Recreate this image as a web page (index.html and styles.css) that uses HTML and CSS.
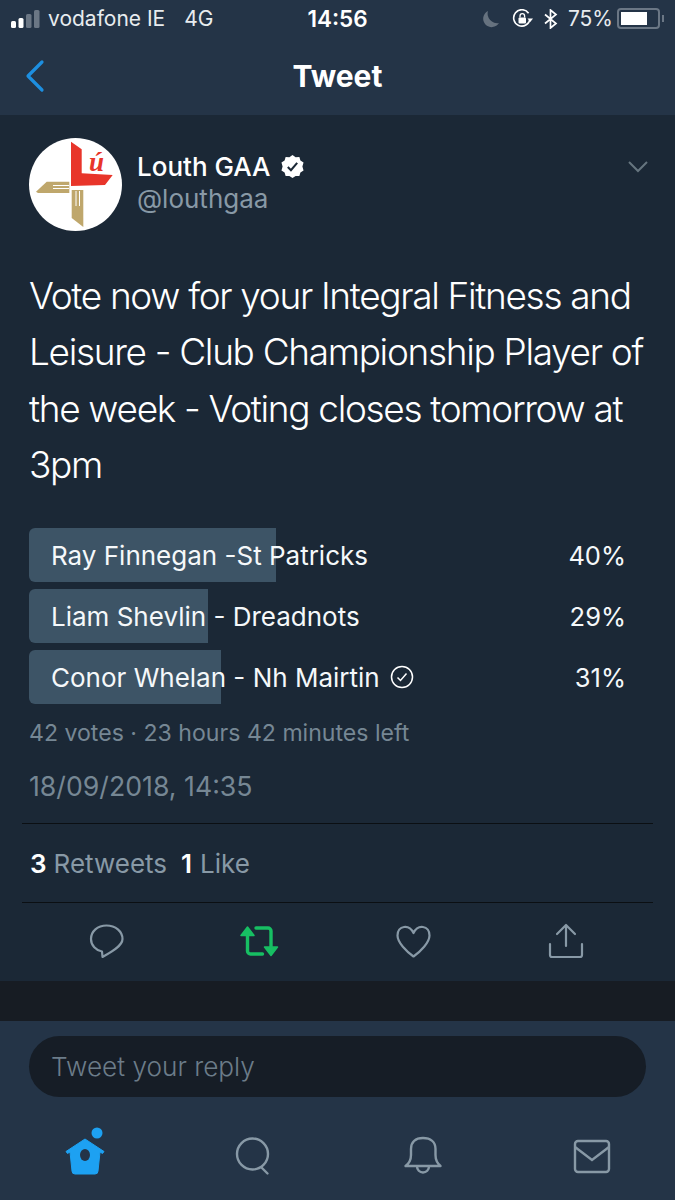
FILE: index.html
```html
<!DOCTYPE html>
<html lang="en">
<head>
<meta charset="utf-8">
<title>Tweet</title>
<link rel="stylesheet" href="styles.css">
</head>
<body>
<div class="app">
  <header class="top">
    <div class="status">
      <div class="status-left">
        <svg class="signal" width="30" height="20" viewBox="0 0 30 20"><rect x="0" y="12" width="5" height="7" rx="1.5" fill="#fff"/><rect x="7.5" y="9" width="5" height="10" rx="1.5" fill="#fff"/><rect x="15" y="5" width="5.5" height="14" rx="1.5" fill="#6b7785"/><rect x="23" y="1" width="5.5" height="18" rx="1.5" fill="#6b7785"/></svg>
        <span>vodafone IE</span>
        <span class="net">4G</span>
      </div>
      <div class="time">14:56</div>
      <div class="status-right">
        <svg class="moon" width="18" height="18" viewBox="0 0 18 18"><path d="M6 1a8.5 8.5 0 1 0 11 12A9.5 9.5 0 0 1 6 1z" fill="#66727f"/></svg>
        <svg class="lock" width="22" height="20" viewBox="0 0 22 20"><path d="M16.6 4.2A8.2 8.2 0 1 0 18 10" fill="none" stroke="#fff" stroke-width="1.6"/><path d="M15.5 9.5h5.5L18.300 13z" fill="#fff"/><rect x="6.500" y="8.500" width="7.500" height="6" rx="1" fill="#fff"/><path d="M8 8.500V7a2.300 2.300 0 0 1 4.600 0v1.500" fill="none" stroke="#fff" stroke-width="1.300"/></svg>
        <svg class="bt" width="14" height="20" viewBox="0 0 14 20"><path d="M1 5.500l11 9-5.500 4.500V1L12 5.500l-11 9" fill="none" stroke="#fff" stroke-width="1.700"/></svg>
        <span class="pct">75%</span>
        <div class="battery"><div class="battery-fill"></div></div>
        <div class="battery-nub"></div>
      </div>
    </div>
    <nav class="nav">
      <svg class="back" width="20" height="34" viewBox="0 0 20 34"><path d="M17 3L3 17l14 14" fill="none" stroke="#1d8fe0" stroke-width="3.200" stroke-linecap="round" stroke-linejoin="round"/></svg>
      <h1 class="title">Tweet</h1>
    </nav>
  </header>

  <main class="tweet">
    <div class="author">
      <svg class="avatar" width="93" height="93" viewBox="0 0 93 93">
        <circle cx="46.500" cy="46.500" r="46.500" fill="#fff"/>
        <path d="M42 3.700L52.700 11.300V35.300L83.700 37L76 47L42 48z" fill="#e8352a"/>
        <text class="avatar-letter" x="60" y="33">ú</text>
        <path d="M7 53.700L17.700 43.700H40.300V55H9z" fill="#bfa76c"/>
        <path d="M42.700 52H54.300V89L42.700 80z" fill="#bfa76c"/>
        <path d="M24 47.500H40M24 50.500H40M47 53V68M50.500 53V68" stroke="#fff" stroke-width="1"/>
      </svg>
      <div class="names">
        <div class="name-row">
          <span class="name">Louth GAA</span>
          <svg width="25" height="25" viewBox="0 0 24 24"><path d="M12 1l3 2 3.600-.2 1 3.400 3 2L21.500 12l1.100 3.800-3 2-1 3.400-3.600-.2-3 2-3-2-3.600.2-1-3.400-3-2L2.500 12 1.400 8.200l3-2 1-3.400L9 3z" fill="#fff"/><path d="M7.500 12.500l3 3 6-7" fill="none" stroke="#1b2836" stroke-width="2"/></svg>
        </div>
        <div class="handle">@louthgaa</div>
      </div>
      <svg class="chev" width="22" height="14" viewBox="0 0 22 14"><path d="M2 2l9 9 9-9" fill="none" stroke="#66757f" stroke-width="2"/></svg>
    </div>

    <p class="text">Vote now for your Integral Fitness and Leisure - Club Championship Player of the week - Voting closes tomorrow at 3pm</p>

    <div class="poll">
      <div class="option">
        <div class="bar" style="width:40%"></div>
        <span class="label">Ray Finnegan -St Patricks</span>
        <span class="value">40%</span>
      </div>
      <div class="option">
        <div class="bar" style="width:29%"></div>
        <span class="label">Liam Shevlin - Dreadnots</span>
        <span class="value">29%</span>
      </div>
      <div class="option">
        <div class="bar" style="width:31.100%"></div>
        <span class="label">Conor Whelan - Nh Mairtin</span>
        <svg class="voted" width="24" height="24" viewBox="0 0 24 24"><circle cx="12" cy="12" r="10.500" fill="none" stroke="#fff" stroke-width="1.500"/><path d="M7.500 12.500l3 3 6-7" fill="none" stroke="#fff" stroke-width="1.500"/></svg>
        <span class="value">31%</span>
      </div>
    </div>

    <div class="votes">42 votes · 23 hours 42 minutes left</div>
    <div class="date">18/09/2018, 14:35</div>

    <div class="stats">
      <b>3</b><span class="stat-label">Retweets</span><b class="second">1</b><span class="stat-label">Like</span>
    </div>

    <div class="actions">
      <svg width="40" height="44" viewBox="0 0 40 44"><path d="M20.500 5.500c-9 0-15.500 6-15.500 13.500 0 6.500 5 11.500 11 12.500l.5 5.500c7-4 20-10.500 20-18C36.500 11.500 29.500 5.500 20.500 5.500z" fill="none" stroke="#8899a6" stroke-width="2.200" stroke-linejoin="round"/></svg>
      <svg width="40" height="44" viewBox="0 0 40 44"><g fill="none" stroke="#17bf63" stroke-width="3.400" stroke-linecap="round" stroke-linejoin="round"><path d="M8.500 14v17a3 3 0 0 0 3 3h12"/><path d="M32 28V11a3 3 0 0 0-3-3H17"/></g><path d="M8.500 7L2 15.500h13zM32 35.500L38.500 27h-13z" fill="#17bf63" stroke="#17bf63" stroke-width="1.500" stroke-linejoin="round"/></svg>
      <svg width="40" height="44" viewBox="0 0 40 44"><path d="M20.500 13C18 8 14.500 6.500 11 7C7 7.500 4.500 11 4.500 15.500c0 7 9 16 16 21 7-5 16-14 16-21C36.500 11 34 7.500 30 7c-3.500-.5-7 1-9.500 6z" fill="none" stroke="#8899a6" stroke-width="2.200" stroke-linejoin="round"/></svg>
      <svg width="40" height="44" viewBox="0 0 40 44"><path d="M20 26V6M11 14l9-9 9 9M4 24v11a2 2 0 0 0 2 2h28a2 2 0 0 0 2-2V24" fill="none" stroke="#8899a6" stroke-width="2.200" stroke-linecap="round" stroke-linejoin="round"/></svg>
    </div>
  </main>

  <footer class="foot">
    <div class="reply">Tweet your reply</div>
    <div class="tabs">
      <svg width="44" height="60" viewBox="0 0 44 60"><circle cx="34" cy="12" r="5.500" fill="#1da1f2"/><path d="M22 18L3 30.500l1.500 2L7 31l2 19a3 3 0 0 0 3 3h20a3 3 0 0 0 3-3l2-19 2.500 1.500 1.500-2z" fill="#1da1f2" stroke="#1da1f2" stroke-linejoin="round"/><ellipse cx="22" cy="34" rx="5" ry="6" fill="#243447"/></svg>
      <svg width="44" height="60" viewBox="0 0 44 60"><circle cx="20.500" cy="33" r="15.500" fill="none" stroke="#8899a6" stroke-width="2.400"/><path d="M29 46l6.500 6.500" fill="none" stroke="#8899a6" stroke-width="2.400" stroke-linecap="round"/></svg>
      <svg width="44" height="60" viewBox="0 0 44 60"><path d="M5.500 45h35c-3-2.500-5-6-5-11v-6c0-7-5-11-12.500-11S11 21 11 28v6c0 5-2 8.500-5.500 11z" fill="none" stroke="#8899a6" stroke-width="2.400" stroke-linejoin="round"/><path d="M17 45.500a6 6 0 0 0 12 0" fill="none" stroke="#8899a6" stroke-width="2.400"/></svg>
      <svg width="44" height="60" viewBox="0 0 44 60"><rect x="6" y="20" width="34" height="31" rx="3" fill="none" stroke="#8899a6" stroke-width="2.400"/><path d="M6 26l17 13 17-13" fill="none" stroke="#8899a6" stroke-width="2.400"/></svg>
    </div>
  </footer>
</div>
</body>
</html>
```

FILE: styles.css
```css
* { box-sizing: border-box; }
html, body { margin: 0; padding: 0; }
body { background: #14191f; font-family: Inter, "Liberation Sans", sans-serif; color: #fff; }
.app { width: 675px; height: 1200px; overflow: hidden; display: flex; flex-direction: column; background: #171c23; }

.top { height: 115px; background: #243447; flex: none; }
.status { height: 37px; display: grid; grid-template-columns: 1fr auto 1fr; align-items: center; padding: 0 11px; font-size: 21px; color: #e8ecef; }
.status-left { display: flex; align-items: center; gap: 7px; }
.net { margin-left: 12px; }
.time { font-weight: 600; font-size: 22.500px; color: #fff; }
.status-right { display: flex; align-items: center; justify-content: flex-end; gap: 10px; }
.moon { margin-right: 2px; }
.battery { width: 43px; height: 21px; border: 2px solid #6b7785; border-radius: 4px; padding: 2px; margin-left: -6px; }
.battery-fill { width: 75%; height: 100%; background: #fff; }
.battery-nub { width: 2px; height: 7px; background: #6b7785; margin-left: -8px; }

.nav { height: 78px; display: grid; grid-template-columns: 1fr auto 1fr; align-items: center; padding: 0 25px 0 25px; }
.back { justify-self: start; }
.title { margin: 0; font-size: 30px; font-weight: 700; line-height: 1; color: #fff; }

.tweet { height: 866px; flex: none; background: #1b2836; padding: 23px 22px 0; }
.author { display: flex; align-items: flex-start; padding-left: 7px; }
.avatar { flex: none; display: block; }
.avatar-letter { font-family: "Liberation Serif", serif; font-weight: 700; font-style: italic; font-size: 27px; fill: #e8352a; }
.names { margin-left: 15px; padding-top: 13px; flex: 1; }
.name-row { display: flex; align-items: center; gap: 9px; height: 30px; }
.name { font-size: 26px; font-weight: 500; color: #fff; }
.handle { margin-top: 3px; font-size: 26px; line-height: 30px; color: #8899a6; }
.chev { margin: 22px 4px 0 0; }

.text { margin: 37px 0 0 7px; width: 630px; font-size: 37px; line-height: 56.300px; font-weight: 300; color: #fff; letter-spacing: -1.330px; }

.poll { margin: 35px 0 0 7px; width: 617px; display: flex; flex-direction: column; gap: 7px; }
.option { position: relative; height: 54px; display: flex; align-items: center; padding: 0 21px 0 22px; font-size: 26px; color: #f5f8fa; }
.bar { position: absolute; left: 0; top: 0; bottom: 0; background: #3d5466; border-radius: 6px 0 0 6px; }
.label, .value, .voted { position: relative; }
.voted { margin-left: 10px; }
.value { margin-left: auto; margin-right: -1px; font-size: 25.500px; }

.votes { margin: 17px 0 0 7px; font-size: 23.100px; line-height: 24px; color: #768794; }
.date { margin: 27px 0 0 7px; font-size: 26.700px; line-height: 28px; color: #768794; }

.stats { margin-top: 23px; height: 80px; border-top: 1px solid #0b0f13; border-bottom: 1px solid #0b0f13; display: flex; align-items: center; padding: 0 7px 0 8px; font-size: 26px; color: #8899a6; }
.stats b { font-weight: 600; color: #fff; }
.stat-label { margin-left: 7px; }
.stats .second { margin-left: 14px; }
.stats .second + .stat-label { margin-left: 8px; }

.actions { display: flex; justify-content: space-between; padding: 17px 67px 0 64px; }

.foot { height: 179px; margin-top: 40px; flex: none; background: #243447; padding: 15px 29px 0; border-top: 0; }
.reply { height: 61px; width: 617px; border-radius: 31px; background: #161d26; color: #6c7c89; font-size: 26.200px; display: flex; align-items: center; padding-left: 22px; font-weight: 300; }
.tabs { display: flex; justify-content: space-between; padding: 24px 33px 0 34px; }
```
